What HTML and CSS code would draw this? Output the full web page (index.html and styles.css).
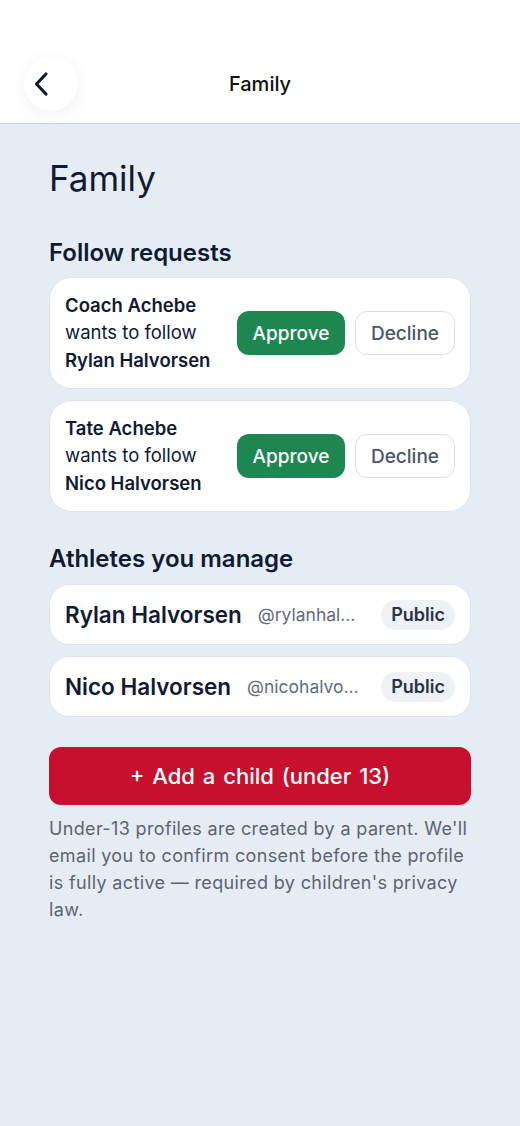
FILE: index.html
```html
<!DOCTYPE html>
<html lang="en">
<head>
  <meta charset="UTF-8" />
  <meta name="viewport" content="width=device-width, initial-scale=1.0">
  <title>Family</title>
  <link rel="stylesheet" href="styles.css">
</head>
<body>

  <header class="topbar">
    <button class="back-btn" aria-label="Back">
      <svg width="16" height="26" viewBox="0 0 16 26" fill="none">
        <path d="M13 3 L3.5 13 L13 23" stroke="#111a33" stroke-width="3.2" stroke-linecap="round" stroke-linejoin="round"/>
      </svg>
    </button>
    <div class="topbar-title">Family</div>
  </header>

  <main class="page">
    <h1 class="page-title">Family</h1>

    <h2 class="section-title">Follow requests</h2>

    <div class="request-card">
      <div class="request-text">
        <b>Coach Achebe</b>
        <span>wants to follow</span>
        <b>Rylan Halvorsen</b>
      </div>
      <div class="request-actions">
        <button class="btn-approve">Approve</button>
        <button class="btn-decline">Decline</button>
      </div>
    </div>

    <div class="request-card">
      <div class="request-text">
        <b>Tate Achebe</b>
        <span>wants to follow</span>
        <b>Nico Halvorsen</b>
      </div>
      <div class="request-actions">
        <button class="btn-approve">Approve</button>
        <button class="btn-decline">Decline</button>
      </div>
    </div>

    <h2 class="section-title managed">Athletes you manage</h2>

    <div class="athlete-card">
      <span class="athlete-name">Rylan Halvorsen</span>
      <span class="athlete-handle">@rylanhal…</span>
      <span class="pill">Public</span>
    </div>

    <div class="athlete-card">
      <span class="athlete-name">Nico Halvorsen</span>
      <span class="athlete-handle">@nicohalvo…</span>
      <span class="pill">Public</span>
    </div>

    <button class="btn-add">+ Add a child (under 13)</button>

    <p class="note">Under-13 profiles are created by a parent. We'll email you to confirm consent before the profile is fully active — required by children's privacy law.</p>
  </main>

</body>
</html>
```

FILE: styles.css
```css
* {
  box-sizing: border-box;
}

body {
  margin: 0;
  padding: 0;
  font-family: Inter, "Noto Sans", sans-serif;
  background-color: #e6ecf4;
  color: #111a33;
  min-height: 100vh;
}

button {
  font-family: inherit;
  cursor: pointer;
}

.topbar {
  background: #fff;
  height: 124px;
  border-bottom: 1px solid #cfd3d9;
  display: flex;
  align-items: center;
  justify-content: center;
  padding-top: 44px;
  position: relative;
}

.back-btn {
  position: absolute;
  left: 24px;
  top: 57px;
  width: 54px;
  height: 54px;
  border-radius: 50%;
  border: none;
  background: #fff;
  box-shadow: 0 4px 18px rgba(20, 30, 60, 0.06);
  display: flex;
  align-items: center;
  justify-content: flex-start;
  padding: 0 0 0 9px;
}

.topbar-title {
  font-size: 20px;
  font-weight: 500;
  color: #111;
}

.page {
  padding: 0 49px;
}

.page-title {
  font-size: 35px;
  font-weight: 400;
  margin: 32px 0 0;
  line-height: 44px;
}

.section-title {
  font-size: 24px;
  font-weight: 600;
  margin: 38px 0 9px;
  line-height: 30px;
}

.section-title.managed {
  margin-top: 32px;
  margin-bottom: 10px;
}

.request-card {
  background: #fff;
  border: 1px solid #dde3ec;
  border-radius: 22px;
  height: 112px;
  padding: 0 15px;
  display: flex;
  align-items: center;
  justify-content: space-between;
  margin-bottom: 11px;
}

.request-text {
  display: flex;
  flex-direction: column;
  font-size: 18.5px;
  line-height: 27.5px;
}

.request-text b {
  font-weight: 600;
}

.request-actions {
  display: flex;
  gap: 10px;
}

.btn-approve {
  background: #1e8751;
  color: #fff;
  border: none;
  border-radius: 12px;
  height: 44px;
  width: 108px;
  font-size: 19px;
  font-weight: 500;
}

.btn-decline {
  background: #fff;
  color: #4d5668;
  border: 1px solid #dcdfe4;
  border-radius: 12px;
  height: 44px;
  width: 100px;
  font-size: 19px;
  font-weight: 500;
}

.athlete-card {
  background: #fff;
  border: 1px solid #dde3ec;
  border-radius: 20px;
  height: 61px;
  padding: 0 15px;
  display: flex;
  align-items: center;
  margin-bottom: 11px;
}

.athlete-name {
  font-size: 22.5px;
  font-weight: 600;
  white-space: nowrap;
}

.athlete-handle {
  flex: 1;
  min-width: 0;
  font-size: 17.5px;
  color: #636b78;
  margin-left: 16px;
  white-space: nowrap;
}

.pill {
  background: #eef1f5;
  border-radius: 15px;
  padding: 0 10px;
  height: 30px;
  line-height: 30px;
  font-size: 18px;
  font-weight: 600;
  color: #2a3145;
  margin-left: 12px;
}

.btn-add {
  display: block;
  width: 100%;
  height: 58px;
  margin-top: 30px;
  background: #c8102e;
  color: #fff;
  border: none;
  border-radius: 12px;
  font-size: 22px;
  font-weight: 500;
  word-spacing: 2px;
}

.note {
  font-size: 18px;
  letter-spacing: 0.35px;
  line-height: 27px;
  color: #5b6473;
  margin: 10px 0 0;
}
```
